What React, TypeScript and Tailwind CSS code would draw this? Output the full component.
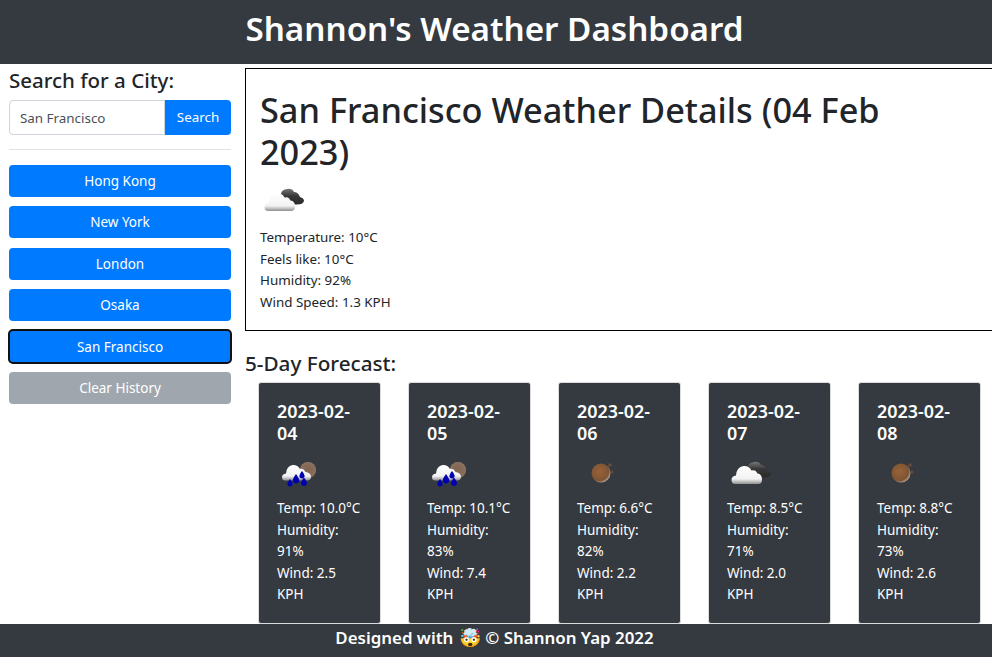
const font = { fontFamily: '"Noto Sans", "Open Sans", sans-serif' };

function Defs({ gid }: { gid: string }) {
  return (
    <defs>
      <linearGradient id={gid + "w"} x1="0" y1="0" x2="0" y2="1">
        <stop offset="0" stopColor="#ffffff" />
        <stop offset="0.72" stopColor="#f2f2f2" />
        <stop offset="1" stopColor="#8f8f8f" />
      </linearGradient>
      <linearGradient id={gid + "d"} x1="0" y1="0" x2="0" y2="1">
        <stop offset="0" stopColor="#777777" />
        <stop offset="0.45" stopColor="#383838" />
        <stop offset="1" stopColor="#2a2a2a" />
      </linearGradient>
      <radialGradient id={gid + "m"} cx="0.42" cy="0.42" r="0.62">
        <stop offset="0" stopColor="#9a6238" />
        <stop offset="0.78" stopColor="#7c5535" />
        <stop offset="1" stopColor="#c8b09a" />
      </radialGradient>
      <radialGradient id={gid + "t"} cx="0.5" cy="0.5" r="0.6">
        <stop offset="0" stopColor="#7d6552" />
        <stop offset="0.75" stopColor="#8a6f5a" />
        <stop offset="1" stopColor="#b9a797" />
      </radialGradient>
    </defs>
  );
}

const whitePath =
  "M8 40 Q4.5 40 4.5 36 Q4.5 32 9 31.5 Q9.5 23 16.5 22 Q22 21.5 24.5 26.5 Q28.5 25 30.5 29.5 Q35 30 35 35.5 Q35 40 31 40 Z";

function Cloudy({ gid }: { gid: string }) {
  return (
    <svg width="50" height="50" viewBox="0 0 50 50" className="block blur-[0.3px]">
      <Defs gid={gid} />
      <path
        d="M21 25 Q20 19 27 18 Q32 17 34 21 Q38 21 40 26 Q44 27 44 30 Q43 33.5 37 33.5 Q30 34 24 30 Z"
        fill={`url(#${gid}d)`}
      />
      <path d={whitePath} fill={`url(#${gid}w)`} />
    </svg>
  );
}

function Clear({ gid }: { gid: string }) {
  return (
    <svg width="50" height="50" viewBox="0 0 50 50" className="block blur-[0.3px]">
      <Defs gid={gid} />
      <circle cx="24" cy="29" r="9.5" fill={`url(#${gid}m)`} />
      <circle cx="33" cy="21" r="1.8" fill="#6a4c38" />
      <circle cx="35" cy="28" r="1.5" fill="#6a4c38" />
    </svg>
  );
}

function Drop({ x, y, s = 1 }: { x: number; y: number; s?: number }) {
  return (
    <path
      transform={`translate(${x} ${y}) scale(${s})`}
      d="M0 -4 Q3 0 2.6 1.6 Q2 3.6 0 3.6 Q-2 3.6 -2.6 1.6 Q-3 0 0 -4 Z"
      fill="#0000b0"
    />
  );
}

function Rain({ gid }: { gid: string }) {
  return (
    <svg width="50" height="50" viewBox="0 0 50 50" className="block blur-[0.3px]">
      <Defs gid={gid} />
      <circle cx="31" cy="26" r="8" fill={`url(#${gid}t)`} />
      <path
        d="M8 36.5 Q5 36.5 5 33 Q5 30 9 29.5 Q9.5 22 15.5 21 Q20.5 20.5 23 25 Q26.5 24 28.5 28 Q33.5 28.5 34 32.5 Q34 36.5 30 36.5 Z"
        fill={`url(#${gid}w)`}
      />
      <Drop x={13} y={39} />
      <Drop x={19} y={35} s={1.25} />
      <Drop x={25} y={31} />
      <Drop x={27} y={38} s={1.1} />
    </svg>
  );
}

const cities = ["Hong Kong", "New York", "London", "Osaka"];

const days = [
  { date: "2023-02-", end: "04", icon: "rain", temp: "10.0", hum: "91", wind: "2.5" },
  { date: "2023-02-", end: "05", icon: "rain", temp: "10.1", hum: "83", wind: "7.4" },
  { date: "2023-02-", end: "06", icon: "clear", temp: "6.6", hum: "82", wind: "2.2" },
  { date: "2023-02-", end: "07", icon: "cloudy", temp: "8.5", hum: "71", wind: "2.0" },
  { date: "2023-02-", end: "08", icon: "clear", temp: "8.8", hum: "73", wind: "2.6" },
];

export default function App() {
  return (
    <div className="relative h-[657px] w-[992px] overflow-hidden bg-white text-[#212529]" style={font}>
      <header className="flex h-[64px] items-center justify-center bg-[#343a40] pb-[6px] pr-[3px] text-[33.2px] font-semibold text-white">
        Shannon's Weather Dashboard
      </header>
      <div className="flex">
        <aside className="flex w-[245px] shrink-0 flex-col pl-[9px] pr-[14px]">
          <h2 className="mt-[1px] h-[35px] text-[20.5px] font-medium leading-[30px]">Search for a City:</h2>
          <div className="flex h-[35px]">
            <div className="flex w-[156px] items-center rounded-l-[4px] border border-[#ced4da] pl-[10px] pt-[2px] text-[13.4px] text-[#495057]">
              San Francisco
            </div>
            <div className="flex flex-1 items-center justify-center rounded-r-[4px] bg-[#007bff] text-[13.4px] text-white">
              Search
            </div>
          </div>
          <div className="mt-[14px] mb-[15px] h-px bg-[#e2e3e5]" />
          <div className="flex flex-col gap-[9.4px]">
            {cities.map((c) => (
              <div
                key={c}
                className="flex h-[32px] items-center justify-center rounded-[4px] bg-[#007bff] text-[13.5px] text-white"
              >
                {c}
              </div>
            ))}
            <div className="-mx-px -mt-[1.6px] -mb-[1.4px] flex h-[35px] items-center justify-center rounded-[5px] border-2 border-[#111] bg-[#007bff] pt-[1px] text-[13.5px] text-white">
              San Francisco
            </div>
            <div className="flex h-[32px] items-center justify-center rounded-[4px] bg-[#9fa6ad] text-[13.5px] text-white">
              Clear History
            </div>
          </div>
        </aside>
        <main className="w-[760px] shrink-0">
          <section className="mt-[4px] h-[263px] border border-black pl-[14px] pt-[20px]">
            <h1 className="w-[700px] text-[34.3px] font-medium leading-[42px]">
              San Francisco Weather Details (04 Feb 2023)
            </h1>
            <div className="h-[56px]">
              <div className="-mt-[2px]">
                <Cloudy gid="hero" />
              </div>
            </div>
            <div className="text-[13.4px] leading-[21.5px]">
              <p>Temperature: 10°C</p>
              <p>Feels like: 10°C</p>
              <p>Humidity: 92%</p>
              <p>Wind Speed: 1.3 KPH</p>
            </div>
          </section>
          <h2 className="mt-[18px] h-[33px] text-[20.7px] font-medium leading-[28px]">5-Day Forecast:</h2>
          <div className="flex h-[242px] gap-[27px] pl-[13px]">
            {days.map((d, i) => (
              <div
                key={d.end}
                className="h-full w-[123px] rounded-[3px] border border-[#dcdcdc] bg-[#343a40] px-[18px] pt-[17px] text-white"
              >
                <div className="text-[17.9px] font-semibold leading-[22px]">
                  {d.date}
                  <br />
                  {d.end}
                </div>
                <div className="h-[54px]">
                  {d.icon === "rain" && <Rain gid={`r${i}`} />}
                  {d.icon === "clear" && <Clear gid={`c${i}`} />}
                  {d.icon === "cloudy" && <Cloudy gid={`k${i}`} />}
                </div>
                <div className="text-[13.5px] leading-[21.5px]">
                  <p>Temp: {d.temp}°C</p>
                  <p>Humidity: {d.hum}%</p>
                  <p>Wind: {d.wind} KPH</p>
                </div>
              </div>
            ))}
          </div>
        </main>
      </div>
      <footer className="absolute bottom-0 left-0 flex h-[33px] w-full items-center justify-center gap-[6px] bg-[#343a40] pb-[6px] pr-[3px] text-[16.9px] font-semibold text-white">
        <span>Designed with</span>
        <span style={{ fontFamily: '"Noto Color Emoji", sans-serif' }} className="w-[20px] text-[18px] leading-none">🤯</span>
        <span>© Shannon Yap 2022</span>
      </footer>
    </div>
  );
}
